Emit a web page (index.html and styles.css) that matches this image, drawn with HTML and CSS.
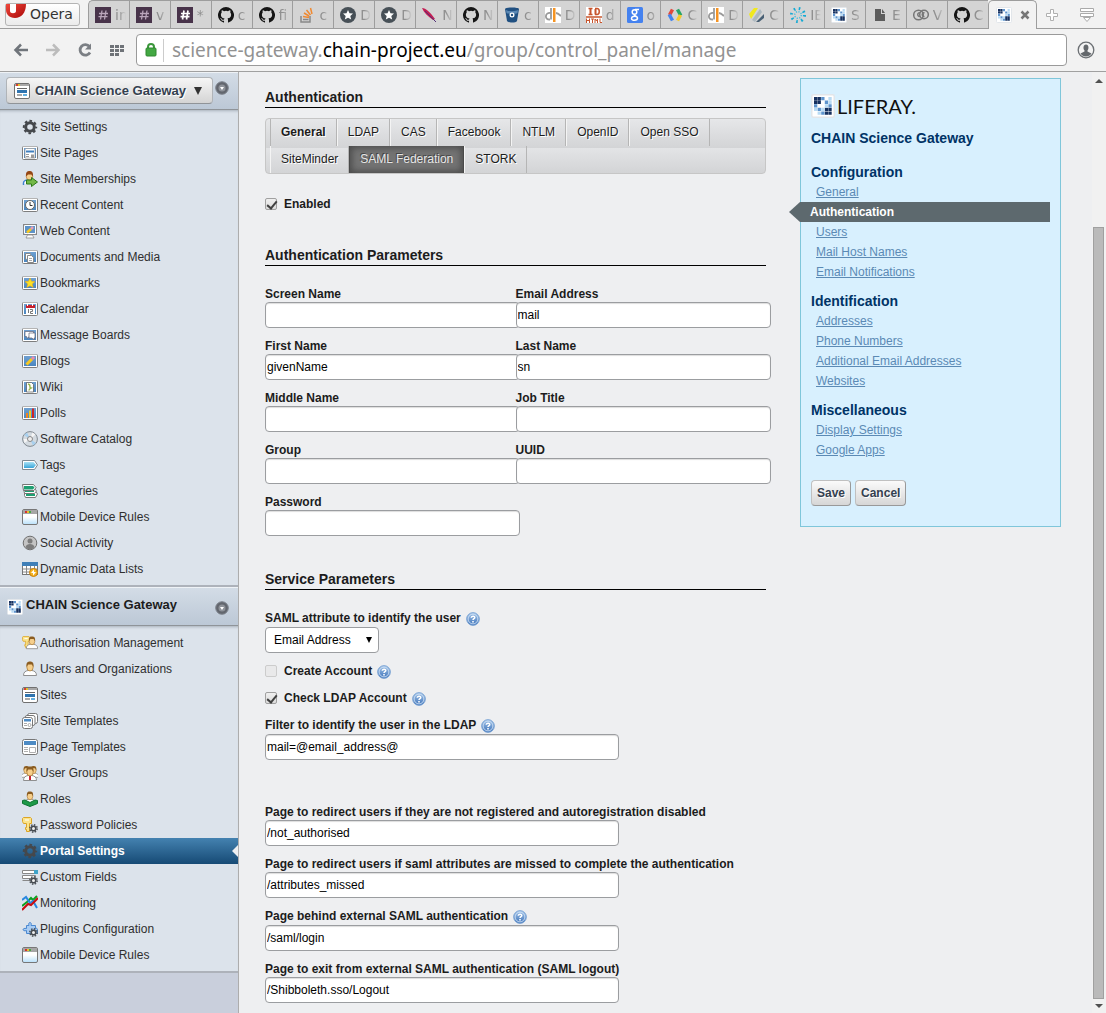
FILE: index.html
```html
<!DOCTYPE html>
<html lang="en">
<head>
<meta charset="utf-8">
<title>CHAIN Science Gateway - Control Panel</title>
<link rel="stylesheet" href="styles.css">
</head>
<body>
<svg class="sprite" aria-hidden="true">
  <defs>
    <linearGradient id="g-blue" x1="0" y1="0" x2="0" y2="1"><stop offset="0" stop-color="#6fa0d0"/><stop offset="1" stop-color="#4a86c0"/></linearGradient>
    <linearGradient id="g-help" x1="0" y1="0" x2="0" y2="1"><stop offset="0" stop-color="#a8c8ea"/><stop offset="1" stop-color="#3a70b8"/></linearGradient>
    <linearGradient id="g-win" x1="0" y1="0" x2="0" y2="1"><stop offset="0.5" stop-color="#fff"/><stop offset="1" stop-color="#b8e0fa"/></linearGradient>
    <linearGradient id="g-tag" x1="0" y1="0" x2="0" y2="1"><stop offset="0" stop-color="#a8e2f6"/><stop offset="1" stop-color="#38a4d8"/></linearGradient>
    <linearGradient id="g-red" x1="0" y1="0" x2="1" y2="1"><stop offset="0" stop-color="#f0483c"/><stop offset="1" stop-color="#a80808"/></linearGradient>
  </defs>
  <symbol id="frame" viewBox="0 0 16 16"><rect x="0.5" y="1.5" width="15" height="13" rx="1" fill="#fff" stroke="#7d7d7d"/><path d="M1 1.5h14" stroke="#b4b4b4"/><rect x="2" y="3" width="12" height="10" fill="url(#g-blue)"/></symbol>
  <symbol id="gear" viewBox="0 0 16 16"><circle cx="8" cy="8" r="4.3" fill="none" stroke="#45484c" stroke-width="3"/><circle cx="8" cy="8" r="6.2" fill="none" stroke="#45484c" stroke-width="2" stroke-dasharray="2.6 2.27" stroke-dashoffset="1.3"/></symbol>
  <symbol id="liferay" viewBox="0 0 16 16"><rect x=".5" y=".5" width="15" height="15" rx="1" fill="#fff" stroke="#e2e6ea"/><path fill="#17315f" d="M2 2h2.200v2.200H2zM4.400 2h2.200v2.200H4.400zM4.400 4.400h2.200v2.200H4.400zM2 4.400h2.200v2.200H2zM9.200 9.200h2.200v2.200H9.200zM11.600 9.200h2.200v2.200h-2.200zM9.200 11.600h2.200v2.200H9.200zM11.600 11.600h2.200v2.200h-2.200z"/><path fill="#5f94cd" d="M6.800 2H9v2.200H6.800zM2 6.800h2.200V9H2zM9.200 4.400h2.200v2.200H9.200zM11.600 6.800h2.200V9h-2.200zM6.800 11.600H9v2.200H6.800zM4.400 9.200h2.200v2.200H4.400z"/><path fill="#b9dbf4" d="M11.600 2h2.200v2.200h-2.200zM11.600 4.400h2.200v2.200h-2.200zM9.200 6.800h2.200V9H9.200zM6.800 9.200H9v2.200H6.800zM4.400 11.600h2.200v2.200H4.400zM2 9.200h2.200v2.200H2z"/></symbol>
  <symbol id="site" viewBox="0 0 16 16"><rect x=".5" y=".5" width="15" height="15" rx="1.500" fill="#fff" stroke="#707070"/><path fill="#a8a8a8" d="M1 1h14v2H1z"/><path fill="#d84030" d="M2 1h2v2H2z"/><path fill="#e0c030" d="M4 1h2v2H4z"/><path fill="#666" d="M3 5h10v1H3z"/><path fill="#2f74b0" d="M3 7h10v3H3z"/><path fill="#a8a8a8" d="M3 11h5v2H3z"/><path fill="#63aede" d="M9 11h4v2H9z"/></symbol>
  <symbol id="pages" viewBox="0 0 16 16"><use href="#frame"/><path fill="#fff" stroke="#888" stroke-width=".6" d="M3 13V4.500l1-1h8l1 1V13z"/><path fill="#3f7fbe" d="M4 5.500h8v2H4z"/><path fill="#999" d="M4 9h3v1H4zM4 11h3v1H4zM9 9.500h3V13H9z"/></symbol>
  <symbol id="person" viewBox="0 0 16 16"><path fill="#fff" stroke="#8f8f8f" d="M1.500 14.500c0-3.500 2-4.500 4.500-5h4c2.500.5 4.500 1.500 4.500 5z"/><ellipse cx="8" cy="6" rx="3.200" ry="4" fill="#f6cf8c" stroke="#a8752c" stroke-width=".7"/><path fill="#8b5d22" d="M4.500 6C4 1 6 .5 8 .5s4 .5 3.500 5.500L10 3.500H6z"/></symbol>
  <symbol id="member" viewBox="0 0 16 16"><path fill="#fff" stroke="#3d7fd0" stroke-width="1.500" d="M1.500 14V12c0-2.500 3-3 4-3h4"/><ellipse cx="7.500" cy="5.500" rx="3.200" ry="3.600" fill="#f6cf8c" stroke="#b06c30" stroke-width=".7"/><path fill="#944614" d="M4 5.500C3.500 1 5.500 0 7.500 0S11.500 1 11 5.500L9.500 3.500H6z"/><path fill="#73b848" stroke="#2e7a18" d="M4.500 9h5V6.500l6 4.500-6 4.500V13h-5z"/></symbol>
  <symbol id="recent" viewBox="0 0 16 16"><use href="#frame"/><circle cx="8" cy="8" r="4.500" fill="#fff" stroke="#666"/><path d="M8 5v3.500h2.500" fill="none" stroke="#333"/></symbol>
  <symbol id="pencilframe" viewBox="0 0 16 16"><use href="#frame"/><path stroke="#f8c820" stroke-width="3" d="M4.500 11.500L10 6"/><path stroke="#e88cb0" stroke-width="3" d="M10 6l2-2"/></symbol>
  <symbol id="web" viewBox="0 0 16 16"><rect x="1.500" y="1.500" width="13" height="10" fill="#5d93c8" stroke="#888"/><path fill="none" stroke="#fff" d="M2.500 2.500h11v8h-11z"/><path stroke="#f8c820" stroke-width="2.500" d="M5 9.500L9 6"/><path stroke="#e6a0b8" stroke-width="2.500" d="M9 6l2-2"/><path fill="#fff" stroke="#8b8b8b" stroke-width=".8" d="M5.500 12h5l1.500 3H4z"/></symbol>
  <symbol id="docs" viewBox="0 0 16 16"><use href="#frame"/><path fill="#fff" stroke="#888" d="M3.500 11V4.500h5v1M5.500 6.500h4l2 2v5h-6z"/><path stroke="#aaa" d="M7 9.500h3M7 11.500h3"/></symbol>
  <symbol id="star" viewBox="0 0 16 16"><use href="#frame"/><path fill="#fde023" stroke="#eaa814" stroke-width=".5" d="M8 3l1.500 3.300 3.500.3-2.700 2.300.9 3.600L8 10.700l-3.200 1.800.9-3.600L3 6.600l3.500-.3z"/></symbol>
  <symbol id="calendar" viewBox="0 0 16 16"><use href="#frame"/><path fill="#fff" d="M4 7h9v6H4z"/><path fill="#c9202c" d="M4 4h9v3H4z"/><path fill="#fff" d="M5 3h1v2H5zM10 3h1v2h-1z"/><path fill="none" stroke="#777" d="M6.500 8v4M8 8.500h2.500v2H8.500v2H11"/></symbol>
  <symbol id="message" viewBox="0 0 16 16"><use href="#frame"/><path fill="#fff" stroke="#667" stroke-width=".7" d="M3 4.500h8.500v5H7l-1.500 2-1-2H3z"/><path fill="#fff" stroke="#667" stroke-width=".7" d="M7 6h6v5h-1v2l-2-2H7z"/></symbol>
  <symbol id="wiki" viewBox="0 0 16 16"><use href="#frame"/><path fill="#fff" stroke="#555" stroke-width=".7" d="M4.500 3.500h5l2 2V13h-7z"/><path fill="none" stroke="#9ab850" stroke-width="1.500" d="M6 5c4 1 0 3 3 4-2 1-2 2-2 2.500"/></symbol>
  <symbol id="polls" viewBox="0 0 16 16"><use href="#frame"/><path fill="#ee8424" d="M4 8h2v5H4z"/><path fill="#f0d024" d="M7 5.500h2V13H7z"/><path fill="#cf2626" d="M10 3.500h2V13h-2z"/></symbol>
  <symbol id="disc" viewBox="0 0 16 16"><circle cx="8" cy="8" r="7.400" fill="#d3dae0" stroke="#818990"/><path fill="#a8d0ee" d="M8 8L2 4l3-2.500zM8 8l6 4-3 2.500z"/><path fill="#f5f5f5" d="M8 8l2.500-6.500 3 2zM8 8l-5.500 4-1-4z"/><circle cx="8" cy="8" r="2.500" fill="#eee" stroke="#888"/></symbol>
  <symbol id="tag" viewBox="0 0 16 16"><path fill="#fff" stroke="#7e8a92" d="M.5 3.500h12L15.500 8l-3 4.500H.5z"/><path fill="url(#g-tag)" d="M2 5h9.500L14 8l-2.500 3H2z"/></symbol>
  <symbol id="categories" viewBox="0 0 16 16"><path fill="#fff" stroke="#777" d="M2.500 8.500h11l2 2.500-2 3.500h-10l-1-2z"/><path fill="#1f9f72" d="M4 11h9v2H4z"/><path fill="#fff" stroke="#777" d="M1.500 5.500h11l2 2.500-2 2.500h-10z"/><path fill="#1f9f72" d="M3 7h9v2H3z"/><path fill="#fff" stroke="#777" d="M.5 1.500h11l2.500 3-2 3H1.500z"/><path fill="#1f9f72" d="M2 3h9l1.500 1.500L11 6.500H2z"/></symbol>
  <symbol id="mobile" viewBox="0 0 16 16"><rect x=".5" y=".5" width="15" height="15" rx="1.500" fill="url(#g-win)" stroke="#777"/><path fill="#a6a6a6" d="M1 1h14v4H1z"/><path fill="#d43030" d="M3 2h2v2H3z"/><path fill="#e8c030" d="M5 2h2v2H5z"/><path fill="#48a848" d="M7 2h2v2H7z"/></symbol>
  <symbol id="social" viewBox="0 0 16 16"><circle cx="8" cy="8" r="6.800" fill="#c4c4c4" stroke="#6f6f6f"/><circle cx="8" cy="6" r="2.500" fill="#7c7c7c"/><path fill="#7c7c7c" d="M3.500 12c.5-2 2.500-3 4.500-3s4 1 4.500 3l-2 2h-5z"/></symbol>
  <symbol id="ddl" viewBox="0 0 16 16"><rect x=".5" y="1.500" width="15" height="12" fill="#fff" stroke="#777"/><path fill="#3f7fb8" d="M0 1h16v4H0z"/><path fill="none" stroke="#888" d="M1 8h14M1 11h14M4.500 5v8M8.500 5v8M12.500 5v8"/><circle cx="11.500" cy="11.500" r="4" fill="#f6b422" stroke="#c87d08"/><path fill="#fff" d="M12 8.500l-3 3.500h2v2.500l3-3.500h-2z"/></symbol>
  <symbol id="key" viewBox="0 0 16 16"><path fill="#fbe38a" stroke="#dca526" d="M1.500.5h7l1 1v5h-2v8h-3v-2h-1v-2h1v-4h-3l-1-2v-3z"/><path fill="#fff" d="M3 2.500h4v1H3z"/></symbol>
  <symbol id="auth" viewBox="0 0 16 16"><use href="#key" width="13" height="13" y="1"/><use href="#person" x="3" y="0" width="14" height="16"/></symbol>
  <symbol id="sitetpl" viewBox="0 0 16 16"><rect x="5.500" y=".5" width="10" height="10" rx="2" fill="#fff" stroke="#777"/><rect x="3" y="2.500" width="10" height="10" rx="2" fill="#fff" stroke="#777"/><rect x=".5" y="4.500" width="10" height="11" rx="2" fill="#fff" stroke="#777"/><path fill="#4d8bc4" d="M2 6h7v2.500H2z"/><path fill="#aaa" d="M2 10h3v1H2zM2 12h3v1H2z"/><circle cx="7.500" cy="12" r="1.500" fill="none" stroke="#aaa"/></symbol>
  <symbol id="pagetpl" viewBox="0 0 16 16"><rect x=".5" y=".5" width="15" height="15" rx="2" fill="#fff" stroke="#777"/><path fill="#4d8bc4" d="M2 2h12v4H2z"/><path stroke="#b0b0b0" d="M2 8.500h4M2 10.500h4M2 12.500h4"/><path fill="#fff" stroke="#b0b0b0" d="M7.500 8.500h6v5h-6z"/></symbol>
  <symbol id="groups" viewBox="0 0 16 16"><use href="#person" x="-2" y="0" width="13" height="14"/><use href="#person" x="5" y="0" width="13" height="14"/><use href="#person" x="0" y="1" width="16" height="16"/><path fill="#c82838" d="M7 11h2v4H7z"/></symbol>
  <symbol id="roles" viewBox="0 0 16 16"><use href="#person" x="1" y="0" width="14" height="14"/><path fill="#1d9a48" stroke="#0d7432" d="M.5 9.500L3 9l5 2.500L13 9l2.500.5v3L8 15.500l-7.500-3z"/></symbol>
  <symbol id="minigear" viewBox="0 0 16 16"><circle cx="11.500" cy="11.500" r="2.300" fill="#eee" stroke="#454a50" stroke-width="1.600"/><circle cx="11.500" cy="11.500" r="3.700" fill="none" stroke="#454a50" stroke-width="1.400" stroke-dasharray="1.500 1.400"/></symbol>
  <symbol id="password" viewBox="0 0 16 16"><use href="#key"/><use href="#minigear"/></symbol>
  <symbol id="fields" viewBox="0 0 16 16"><path fill="#fff" stroke="#888" d="M.5 1.500h13v3H.5zM.5 6.500h13v3H.5zM.5 11.500h9"/><path fill="#3fa3c8" d="M12 1h4v4h-4z"/><use href="#minigear"/></symbol>
  <symbol id="monitor" viewBox="0 0 16 16"><g fill="none" stroke-width="2"><path stroke="#0da020" d="M0 11l5-4 4-4 2 2 4-4"/><path stroke="#2888e0" d="M0 5l4-3 4 6 3-2 4 7"/><path stroke="#c80c10" d="M0 15l6-6 3 1 7-7"/></g></symbol>
  <symbol id="plugin" viewBox="0 0 16 16"><path fill="#a8ccf4" stroke="#4a88d0" d="M4.500 4.500H7c-1.500-4 3.500-4 2 0h4.500v3c1-.5 2 0 2 1v4h-11v-3c-4 1.500-5-3 0-2z"/><use href="#minigear"/></symbol>
  <symbol id="help" viewBox="0 0 16 16"><circle cx="8" cy="8" r="7.300" fill="url(#g-help)" stroke="#7aa4d4"/><circle cx="8" cy="8" r="5.600" fill="none" stroke="#d3e4f6"/><path fill="none" stroke="#fff" stroke-width="1.700" d="M6 6.700C6 4.200 10.200 4.200 10 6.500 10 7.700 8 7.700 8 9.200"/><path fill="#fff" d="M7.100 10.300h1.800V12H7.100z"/></symbol>
  <symbol id="round" viewBox="0 0 14 14"><circle cx="7" cy="7" r="6.300" fill="#62666e" stroke="#7f858e"/><circle cx="7" cy="7" r="3.500" fill="#8f939a"/><path fill="#fff" d="M5 6h4L7 9z"/></symbol>
  <symbol id="slack" viewBox="0 0 16 16"><path fill="#48334a" d="M0 0h16v16H0z"/><path stroke="#b9a4ba" stroke-width="1.300" d="M7 3.500l-1.500 9M11 3.500l-1.500 9M4 6.500h9M3.500 9.700h9"/></symbol>
  <symbol id="slackon" viewBox="0 0 16 16"><path fill="#48334a" d="M0 0h16v16H0z"/><path stroke="#fff" stroke-width="1.700" d="M7 3.500l-1.500 9M11 3.500l-1.500 9M4 6.500h9M3.500 9.700h9"/></symbol>
  <symbol id="github" viewBox="0 0 16 16"><path fill="#151515" d="M8 0a8 8 0 0 0-2.530 15.590c.4.070.55-.17.55-.38v-1.490c-2.230.48-2.700-.950-2.700-.950-.36-.92-.89-1.170-.89-1.170-.73-.5.050-.49.050-.49.800.06 1.230.830 1.230.830.720 1.220 1.870.870 2.330.660.070-.52.280-.870.510-1.070-1.780-.2-3.640-.890-3.640-3.950 0-.870.310-1.590.820-2.150-.080-.2-.36-1.020.080-2.120 0 0 .670-.220 2.200.820a7.600 7.600 0 0 1 4 0c1.530-1.040 2.200-.820 2.200-.820.440 1.100.160 1.920.080 2.120.510.560.820 1.280.820 2.150 0 3.070-1.870 3.750-3.650 3.950.290.250.540.730.540 1.480v2.200c0 .210.150.460.550.380A8 8 0 0 0 8 0z"/></symbol>
  <symbol id="so" viewBox="0 0 16 16"><path fill="none" stroke="#888" stroke-width="1.500" d="M2 9v6h9V9M4 12.500h5.500"/><path stroke="#ef8a32" stroke-width="1.500" d="M4 9.500l6 1M5 6l5 3M7.500 3l4 5M11.500 1l1.500 6"/></symbol>
  <symbol id="starball" viewBox="0 0 16 16"><circle cx="8" cy="8" r="8" fill="#475057"/><path fill="#fff" d="M8 3l1.500 3.300 3.500.3-2.700 2.300.9 3.600L8 10.700l-3.200 1.800.9-3.600L3 6.600l3.500-.3z"/></symbol>
  <symbol id="feather" viewBox="0 0 16 16"><path fill="#c31d52" d="M0 1c4 0 8 4 13 11l-2 1C6 9 2 6 0 1z"/><path fill="none" stroke="#553078" d="M3 4l11 11"/></symbol>
  <symbol id="bucket" viewBox="0 0 16 16"><path fill="#205081" d="M1 2c0-2 14-2 14 0l-2 12c-1 2-9 2-10 0z"/><path fill="#5b88b4" d="M2 3c2 1.500 10 1.500 12 0L13.500 6c-2 1.500-9 1.500-11 0z"/><circle cx="8" cy="8" r="2.500" fill="#fff"/><circle cx="8" cy="8" r="1.200" fill="#205081"/></symbol>
  <symbol id="dj" viewBox="0 0 16 16"><path fill="#fff" d="M0 0h16v16H0z"/><path fill="none" stroke="#9a9a9a" stroke-width="1.800" d="M6 1v11.500M5.500 6C0 5-1 13 5 12.500M11 6c2 0 3 1 5 3"/><path fill="#f59322" d="M8 1h2.500v14H8z"/></symbol>
  <symbol id="idhtml" viewBox="0 0 16 16"><path fill="#fff" d="M0 0h16v16H0z"/><g fill="none" stroke="#c8552d"><path stroke-width="2" d="M4.500 1.500v6M9.500 2v5.500"/><path stroke-width="1.500" d="M2.500 1.500h4M2.500 7.500h4M9 1.500h2c3 0 3 6 0 6H9M0 10h16"/><path d="M.5 11.500V16M3.500 11.500V16M1 13.500h2M5 12h3M6.500 12v4M9 16v-4l1.500 2 1-2v4M14 11.500v4h2"/></g></symbol>
  <symbol id="google" viewBox="0 0 16 16"><rect width="16" height="16" rx="1.500" fill="#4582ef"/><g fill="none" stroke="#fff" stroke-width="1.500"><circle cx="7.500" cy="5" r="2.300"/><path d="M8 2.500h4M7 7.500c0 1.500 3.500 1.500 3.500 3.500 0 3-6 3-6 .5 0-2 3-2.500 4.500-2"/></g></symbol>
  <symbol id="gdev" viewBox="0 0 16 16"><g fill="none" stroke-width="3.500"><path stroke="#e0493c" d="M5.500 2.500L2.500 8"/><path stroke="#4484ee" d="M2.200 7.500l3.300 6"/><path stroke="#28a468" d="M10.500 2.500L13.800 8.500"/><path stroke="#f6c92c" d="M13.500 8L10.500 13.500"/></g></symbol>
  <symbol id="layers" viewBox="0 0 16 16"><path fill="#f1e91e" d="M0 7l5-6h4L2 12z"/><path fill="#aeb9c0" d="M3 13l8-11 2 3-7 10z"/><path fill="#496074" d="M7 15l8-8v4l-5 4z"/></symbol>
  <symbol id="ieee" viewBox="0 0 16 16"><circle cx="8" cy="8" r="6.500" fill="none" stroke="#14aad4" stroke-width="3" stroke-dasharray="1.600 3.505"/><circle cx="8" cy="8" r="3.300" fill="none" stroke="#4cc0de" stroke-width="1.500" stroke-dasharray="1.200 1.392"/></symbol>
  <symbol id="file" viewBox="0 0 16 16"><path fill="#5c5c5c" d="M3 2h6v5h4v7H3zM10 2l3 4h-3z"/></symbol>
  <symbol id="cc" viewBox="0 0 16 16"><g fill="none" stroke="#777" stroke-width="1.500"><circle cx="5.500" cy="8" r="4.800"/><circle cx="11" cy="7.500" r="4.300"/><path d="M7 6c-3-1-3 4 0 3.500M11.500 6c-3-1-3 4 0 3.500"/></g></symbol>
</svg>

<header class="browser">
  <div class="tabstrip">
    <button class="opera"><svg viewBox="0 0 20 14" class="opera-logo"><path fill="url(#g-red)" d="M0 0h20c0 9-5 14-11 14S0 10 0 6z"/><path fill="#fff" d="M4 0h6v7c0 3-6 3-6 0z"/></svg>Opera</button>
    <nav class="tabs" aria-label="Browser tabs">
      <a class="tab" href="#"><svg><use href="#slack"/></svg><span>in</span></a>
      <a class="tab" href="#"><svg><use href="#slack"/></svg><span>v</span></a>
      <a class="tab" href="#"><svg><use href="#slackon"/></svg><span>*</span></a>
      <a class="tab" href="#"><svg><use href="#github"/></svg><span>c</span></a>
      <a class="tab" href="#"><svg><use href="#github"/></svg><span>fi</span></a>
      <a class="tab" href="#"><svg><use href="#so"/></svg><span>c</span></a>
      <a class="tab" href="#"><svg><use href="#starball"/></svg><span>D</span></a>
      <a class="tab" href="#"><svg><use href="#starball"/></svg><span>D</span></a>
      <a class="tab" href="#"><svg><use href="#feather"/></svg><span>N</span></a>
      <a class="tab" href="#"><svg><use href="#github"/></svg><span>N</span></a>
      <a class="tab" href="#"><svg><use href="#bucket"/></svg><span>c</span></a>
      <a class="tab" href="#"><svg><use href="#dj"/></svg><span>D</span></a>
      <a class="tab" href="#"><svg><use href="#idhtml"/></svg><span>d</span></a>
      <a class="tab" href="#"><svg><use href="#google"/></svg><span>o</span></a>
      <a class="tab" href="#"><svg><use href="#gdev"/></svg><span>C</span></a>
      <a class="tab" href="#"><svg><use href="#dj"/></svg><span>D</span></a>
      <a class="tab" href="#"><svg><use href="#layers"/></svg><span>C</span></a>
      <a class="tab" href="#"><svg><use href="#ieee"/></svg><span>IE</span></a>
      <a class="tab" href="#"><svg><use href="#liferay"/></svg><span>S</span></a>
      <a class="tab" href="#"><svg><use href="#file"/></svg><span>E</span></a>
      <a class="tab" href="#"><svg><use href="#cc"/></svg><span>V</span></a>
      <a class="tab" href="#"><svg><use href="#github"/></svg><span>C</span></a>
      <a class="tab current" href="#"><svg><use href="#liferay"/></svg><svg class="close" viewBox="0 0 10 10"><path d="M1.500 1.500l7 7M8.500 1.500l-7 7" stroke="#777" stroke-width="2.500"/></svg></a>
    </nav>
    <button class="strip-btn" aria-label="New tab"><svg viewBox="0 0 14 14"><path fill="#fff" stroke="#b0b0b0" d="M5.500 1.500h3v4h4v3h-4v4h-3v-4h-4v-3h4z"/></svg></button>
    <button class="strip-btn last" aria-label="Tab menu"><svg viewBox="0 0 16 14"><path fill="#fff" stroke="#aaa" d="M1.500.5h13v3h-13zM1.500 5.500h13v3h-13zM4.500 9.500h7l-3.500 4z"/></svg></button>
  </div>
  <div class="toolbar">
    <button aria-label="Back"><svg viewBox="0 0 16 16"><path fill="none" stroke="#70757b" stroke-width="2.500" d="M15 8H3M8 2.500L2.500 8 8 13.500"/></svg></button>
    <button aria-label="Forward"><svg viewBox="0 0 16 16"><path fill="none" stroke="#bcbcbc" stroke-width="2.500" d="M1 8h12M8 2.500L13.500 8 8 13.500"/></svg></button>
    <button aria-label="Reload"><svg viewBox="0 0 16 16"><path fill="none" stroke="#7b7f84" stroke-width="2.800" d="M12.500 4.500A5.300 5.300 0 1 0 13 10.500"/><path fill="#7b7f84" d="M14 1.500v6H8z"/></svg></button>
    <button aria-label="Speed dial"><svg viewBox="0 0 16 16"><path fill="#6f7378" d="M1 3h4v3H1zM6 3h4v3H6zM11 3h4v3h-4zM1 7h4v3H1zM6 7h4v3H6zM11 7h4v3h-4zM1 11h4v3H1zM6 11h4v3H6z"/></svg></button>
    <div class="address">
      <svg class="lock" viewBox="0 0 12 14"><path fill="none" stroke="#3b963b" stroke-width="2" d="M3 6V4c0-4 6-4 6 0v2"/><rect x="1" y="5" width="10" height="8" rx="1" fill="#43a843" stroke="#308830"/></svg>
      <p class="url">science-gateway.<strong>chain-project.eu</strong>/group/control_panel/manage</p>
    </div>
    <button class="profile" aria-label="Profile"><svg viewBox="0 0 18 18"><circle cx="9" cy="9" r="7.800" fill="#f4f4f4" stroke="#6c7074" stroke-width="1.300"/><path fill="#64686c" d="M9 3.500c3 0 3 4.500 1.500 6v1l4 2c-2.500 4-8.500 4-11 0l4-2v-1c-1.500-1.500-1.500-6 1.500-6z"/></svg></button>
  </div>
</header>

<div class="page">
  <aside class="sidebar">
    <div class="side-head">
      <button class="site-menu"><svg><use href="#site"/></svg><span>CHAIN Science Gateway</span><i class="caret"></i></button>
      <button class="collapse" aria-label="Collapse section"><svg><use href="#round"/></svg></button>
    </div>
    <ul class="side-list">
      <li><a href="#"><svg><use href="#gear"/></svg>Site Settings</a></li>
      <li><a href="#"><svg><use href="#pages"/></svg>Site Pages</a></li>
      <li><a href="#"><svg><use href="#member"/></svg>Site Memberships</a></li>
      <li><a href="#"><svg><use href="#recent"/></svg>Recent Content</a></li>
      <li><a href="#"><svg><use href="#web"/></svg>Web Content</a></li>
      <li><a href="#"><svg><use href="#docs"/></svg>Documents and Media</a></li>
      <li><a href="#"><svg><use href="#star"/></svg>Bookmarks</a></li>
      <li><a href="#"><svg><use href="#calendar"/></svg>Calendar</a></li>
      <li><a href="#"><svg><use href="#message"/></svg>Message Boards</a></li>
      <li><a href="#"><svg><use href="#pencilframe"/></svg>Blogs</a></li>
      <li><a href="#"><svg><use href="#wiki"/></svg>Wiki</a></li>
      <li><a href="#"><svg><use href="#polls"/></svg>Polls</a></li>
      <li><a href="#"><svg><use href="#disc"/></svg>Software Catalog</a></li>
      <li><a href="#"><svg><use href="#tag"/></svg>Tags</a></li>
      <li><a href="#"><svg><use href="#categories"/></svg>Categories</a></li>
      <li><a href="#"><svg><use href="#mobile"/></svg>Mobile Device Rules</a></li>
      <li><a href="#"><svg><use href="#social"/></svg>Social Activity</a></li>
      <li><a href="#"><svg><use href="#ddl"/></svg>Dynamic Data Lists</a></li>
    </ul>
    <div class="side-head portal">
      <h2><svg><use href="#liferay"/></svg>CHAIN Science Gateway</h2>
      <button class="collapse" aria-label="Collapse section"><svg><use href="#round"/></svg></button>
    </div>
    <ul class="side-list">
      <li><a href="#"><svg><use href="#auth"/></svg>Authorisation Management</a></li>
      <li><a href="#"><svg><use href="#person"/></svg>Users and Organizations</a></li>
      <li><a href="#"><svg><use href="#site"/></svg>Sites</a></li>
      <li><a href="#"><svg><use href="#sitetpl"/></svg>Site Templates</a></li>
      <li><a href="#"><svg><use href="#pagetpl"/></svg>Page Templates</a></li>
      <li><a href="#"><svg><use href="#groups"/></svg>User Groups</a></li>
      <li><a href="#"><svg><use href="#roles"/></svg>Roles</a></li>
      <li><a href="#"><svg><use href="#password"/></svg>Password Policies</a></li>
      <li><a class="active" href="#"><svg><use href="#gear"/></svg>Portal Settings</a></li>
      <li><a href="#"><svg><use href="#fields"/></svg>Custom Fields</a></li>
      <li><a href="#"><svg><use href="#monitor"/></svg>Monitoring</a></li>
      <li><a href="#"><svg><use href="#plugin"/></svg>Plugins Configuration</a></li>
      <li><a href="#"><svg><use href="#mobile"/></svg>Mobile Device Rules</a></li>
    </ul>
  </aside>

  <main class="content">
    <form class="settings">
      <h3 class="section">Authentication</h3>
      <ul class="auth-tabs">
        <li><a class="first" href="#">General</a></li>
        <li><a href="#">LDAP</a></li>
        <li><a href="#">CAS</a></li>
        <li><a href="#">Facebook</a></li>
        <li><a href="#">NTLM</a></li>
        <li><a href="#">OpenID</a></li>
        <li><a href="#">Open SSO</a></li>
        <li><a href="#">SiteMinder</a></li>
        <li><a class="selected" href="#">SAML Federation</a></li>
        <li><a href="#">STORK</a></li>
      </ul>
      <label class="check enabled"><input type="checkbox" checked>Enabled</label>

      <h3 class="section">Authentication Parameters</h3>
      <div class="pairs">
        <div class="field"><label for="screen">Screen Name</label><input id="screen" type="text"></div>
        <div class="field"><label for="email">Email Address</label><input id="email" type="text" value="mail"></div>
        <div class="field"><label for="first">First Name</label><input id="first" type="text" value="givenName"></div>
        <div class="field"><label for="last">Last Name</label><input id="last" type="text" value="sn"></div>
        <div class="field"><label for="middle">Middle Name</label><input id="middle" type="text"></div>
        <div class="field"><label for="job">Job Title</label><input id="job" type="text"></div>
        <div class="field"><label for="group">Group</label><input id="group" type="text"></div>
        <div class="field"><label for="uuid">UUID</label><input id="uuid" type="text"></div>
        <div class="field"><label for="pass">Password</label><input id="pass" type="text"></div>
      </div>

      <h3 class="section">Service Parameters</h3>
      <div class="stack">
        <div class="field">
          <label class="helped" for="attr">SAML attribute to identify the user<svg><use href="#help"/></svg></label>
          <div class="select"><select id="attr"><option>Email Address</option></select></div>
        </div>
        <label class="check helped"><input type="checkbox" disabled>Create Account<svg><use href="#help"/></svg></label>
        <label class="check helped"><input type="checkbox" checked>Check LDAP Account<svg><use href="#help"/></svg></label>
        <div class="field wide">
          <label class="helped" for="filter">Filter to identify the user in the LDAP<svg><use href="#help"/></svg></label>
          <input id="filter" type="text" value="mail=@email_address@">
        </div>
      </div>
      <div class="stack redirects">
        <div class="field wide"><label for="noreg">Page to redirect users if they are not registered and autoregistration disabled</label><input id="noreg" type="text" value="/not_authorised"></div>
        <div class="field wide"><label for="missed">Page to redirect users if saml attributes are missed to complete the authentication</label><input id="missed" type="text" value="/attributes_missed"></div>
        <div class="field wide"><label class="helped" for="login">Page behind external SAML authentication<svg><use href="#help"/></svg></label><input id="login" type="text" value="/saml/login"></div>
        <div class="field wide"><label for="logout">Page to exit from external SAML authentication (SAML logout)</label><input id="logout" type="text" value="/Shibboleth.sso/Logout"></div>
      </div>
    </form>

    <aside class="panel">
      <div class="logo"><svg><use href="#liferay"/></svg><span>LIFERAY.</span></div>
      <h2>CHAIN Science Gateway</h2>
      <h3 class="group first-group">Configuration</h3>
      <ul>
        <li><a href="#">General</a></li>
        <li class="here"><a href="#">Authentication</a></li>
        <li><a href="#">Users</a></li>
        <li><a href="#">Mail Host Names</a></li>
        <li><a href="#">Email Notifications</a></li>
      </ul>
      <h3 class="group">Identification</h3>
      <ul>
        <li><a href="#">Addresses</a></li>
        <li><a href="#">Phone Numbers</a></li>
        <li><a href="#">Additional Email Addresses</a></li>
        <li><a href="#">Websites</a></li>
      </ul>
      <h3 class="group">Miscellaneous</h3>
      <ul>
        <li><a href="#">Display Settings</a></li>
        <li><a href="#">Google Apps</a></li>
      </ul>
      <div class="actions"><button>Save</button><button>Cancel</button></div>
    </aside>
  </main>

  <div class="scrollbar"><i class="up"></i><div class="thumb"></div><i class="down"></i></div>
</div>
</body>
</html>
```

FILE: styles.css
```css
* { box-sizing: border-box; }

body {
  margin: 0;
  height: 100vh;
  display: flex;
  flex-direction: column;
  overflow: hidden;
  background: #eeeff1;
  color: #1c1c1c;
  font: 12px/16px "Liberation Sans", Arial, sans-serif;
}

ul, h2, h3, p { margin: 0; padding: 0; }
ul { list-style: none; }
a { color: inherit; text-decoration: none; }
button { font: inherit; padding: 0; border: 0; background: none; }
svg { width: 16px; height: 16px; flex: none; }
.sprite { position: absolute; width: 0; height: 0; }

/* browser chrome */
.browser {
  flex: none;
  background: #f2f2f2;
  border-bottom: 1px solid #a0a0a0;
  font-family: "DejaVu Sans", sans-serif;
}
.tabstrip {
  display: flex;
  height: 29px;
  background: linear-gradient(#f2f2f2, #f2f2f2 28px, #9d9d9d 28px);
}
.opera {
  display: flex;
  align-items: flex-start;
  gap: 4px;
  width: 75px;
  height: 23px;
  margin: 3px 8px 0 5px;
  border: 1px solid #b4b4b4;
  border-radius: 3px;
  background: linear-gradient(#fff, #ebebeb);
  font-size: 14px;
  line-height: 21px;
  color: #333;
}
.opera-logo { width: 20px; height: 14px; }
.tabs { display: flex; flex: 1; min-width: 0; }
.tab {
  display: flex;
  flex: 41 1 0;
  min-width: 0;
  gap: 4px;
  align-items: center;
  height: 29px;
  padding-left: 6px;
  background: #d4d4d4;
  border: solid #9d9d9d;
  border-width: 1px 0 1px 1px;
  font-size: 14px;
  color: #909090;
}
.tab span {
  flex: 1;
  white-space: nowrap;
  -webkit-mask-image: linear-gradient(90deg, #000 4px, transparent 11px);
  mask-image: linear-gradient(90deg, #000 4px, transparent 11px);
}
.tab:first-child { border-top-left-radius: 5px; }
.tab.current {
  flex-grow: 49;
  gap: 8px;
  padding-left: 7px;
  background: #f2f2f2;
  border-width: 1px 1px 0;
  border-radius: 5px 5px 0 0;
}
.tab .close { width: 10px; height: 10px; }
.strip-btn { width: 30px; height: 29px; }
.strip-btn svg { display: block; margin: 0 auto; width: 14px; }
.strip-btn.last { width: 39px; }
.strip-btn.last svg { width: 16px; }

.toolbar {
  display: flex;
  align-items: center;
  gap: 16px;
  height: 42px;
  padding: 0 11px 0 13px;
}
.toolbar button { height: 16px; }
.toolbar svg { display: block; }
.toolbar .profile { height: 18px; margin-left: -6px; }
.profile svg { width: 18px; height: 18px; }
.address {
  display: flex;
  align-items: center;
  flex: 1;
  height: 32px;
  margin-left: -5px;
  padding-left: 8px;
  background: #fff;
  border: 1px solid #9a9a9a;
  border-radius: 4px;
}
.address .lock { width: 12px; height: 14px; }
.url {
  margin-left: 6px;
  padding-left: 8px;
  border-left: 1px solid #ccc;
  font: 19px/23px "Noto Sans", sans-serif;
  color: #929292;
}
.url strong { font-weight: 400; color: #000; }

/* page body */
.page { display: flex; flex: 1; min-height: 0; }

.sidebar {
  flex: none;
  width: 239px;
  overflow: hidden;
  background: #c9cfdc;
  border-right: 1px solid #adadad;
}
.side-head {
  display: flex;
  justify-content: space-between;
  height: 38px;
  padding: 4px 9px 0 6px;
  border-top: 1px solid #eef2f6;
  border-bottom: 1px solid #8f9499;
  background: linear-gradient(#d3dce6, #bcc8d6);
}
.side-head .collapse { height: 14px; margin-top: 4px; }
.collapse svg { display: block; width: 14px; height: 14px; }
.site-menu {
  display: flex;
  align-items: center;
  gap: 5px;
  width: 207px;
  height: 27px;
  padding-left: 7px;
  border: 1px solid #b0b4b8;
  border-bottom-color: #909498;
  border-radius: 4px;
  background: linear-gradient(#f6f6f6, #d4d4d4);
  color: #34404f;
  font-size: 13px;
  font-weight: 700;
  text-shadow: 1px 1px #fff;
}
.caret {
  margin-left: 3px;
  border: solid transparent;
  border-width: 8px 4px 0;
  border-top-color: #333;
}
.portal { height: 39px; padding: 9px 9px 0 7px; }
.portal h2 {
  display: flex;
  align-items: center;
  gap: 3px;
  height: 16px;
  font-size: 13px;
}
.portal h2 svg { margin-top: 3px; }
.side-list {
  padding: 4px 0 3px;
  background: #dce3eb;
  border-bottom: 2px solid #adb2ba;
  box-shadow: inset 0 3px 3px -2px #a8b0ba;
  color: #2f2f2f;
}
.side-list a {
  display: flex;
  align-items: center;
  gap: 2px;
  height: 26px;
  padding-left: 22px;
  position: relative;
}
.side-list .active {
  background: linear-gradient(#4482b0, #164a75);
  color: #fff;
  font-weight: 700;
}
.active::after {
  content: "";
  position: absolute;
  right: 0;
  border: solid transparent;
  border-width: 6px 6px 6px 0;
  border-right-color: #eeeff1;
}

.content {
  display: grid;
  grid-template-columns: minmax(0, 1fr) 261px;
  align-items: start;
  gap: 34px;
  flex: 1;
  min-width: 0;
  padding: 6px 31px 10px 26px;
}
.settings { display: flex; flex-direction: column; padding-top: 10px; }
.section {
  height: 20px;
  margin-top: 34px;
  border-bottom: 1px solid #000;
  font-size: 14px;
  line-height: 18px;
}
.section:first-child { margin-top: 0; }

.auth-tabs {
  display: flex;
  flex-wrap: wrap;
  margin-top: 10px;
  padding-left: 4px;
  border: 1px solid #c6c6c6;
  border-radius: 4px;
  background: linear-gradient(#e6e7e9, #d3d4d6 29px, #e3e4e6 29px, #d3d4d6);
}
.auth-tabs a {
  display: block;
  height: 27px;
  padding: 0 10px;
  border-left: 1px solid #f4f4f4;
  border-right: 1px solid #b5b5b5;
  line-height: 27px;
  text-shadow: 1px 1px #fff;
}
.auth-tabs .first { font-weight: 700; border-left-color: #b5b5b5; }
.auth-tabs .selected {
  border-color: #4a4a4a;
  background: #737373;
  box-shadow: inset 0 0 6px 2px #4c4c4c;
  color: #e6e6e6;
  text-shadow: -1px -1px #444;
}

.check {
  display: flex;
  align-items: flex-start;
  align-self: flex-start;
  height: 16px;
  font-weight: 700;
}
.enabled { margin-top: 22px; }
.check input {
  appearance: none;
  width: 12px;
  height: 12px;
  margin: 2px 7px 0 0;
  border: 1px solid #a0a0a0;
  border-radius: 2px;
  background: linear-gradient(#efefef, #dcdcdc);
  position: relative;
}
.check input:disabled { border-color: #ccc; background: #e9e9ea; }
.check input:checked::after {
  content: "";
  position: absolute;
  left: 3px;
  top: 0;
  width: 4px;
  height: 8px;
  border: solid #404040;
  border-width: 0 2px 2px 0;
  transform: rotate(40deg);
}

.pairs {
  display: grid;
  grid-template-columns: repeat(2, minmax(0, 1fr));
  row-gap: 10px;
  margin-top: 20px;
}
.field { display: flex; flex-direction: column; }
.field label { display: flex; height: 16px; font-weight: 700; white-space: nowrap; }
.field input {
  width: 255px;
  height: 26px;
  padding: 0 1px;
  border: 1px solid #9b9da0;
  border-radius: 4px;
  background: #fff;
  box-shadow: inset 0 1px 1px #ddd;
  font: inherit;
  color: #000;
}
.wide input { width: 354px; }
.stack { display: flex; flex-direction: column; gap: 10px; margin-top: 20px; }
.redirects { margin-top: 44px; }
.field .helped, .check.helped { height: 17px; }
.helped svg { width: 14px; height: 14px; margin: 2px 0 0 5px; }
.select { position: relative; width: 114px; }
.select select {
  display: block;
  appearance: none;
  width: 100%;
  height: 26px;
  padding: 0 8px;
  border: 1px solid #9b9da0;
  border-radius: 4px;
  background: #fff;
  font: inherit;
  color: #000;
}
.select::after {
  content: "";
  position: absolute;
  right: 7px;
  top: 10px;
  border: solid transparent;
  border-width: 6px 3px 0;
  border-top-color: #000;
}

.panel {
  padding: 15px 10px 20px;
  border: 1px solid #7fc6da;
  background: #d8f0fe;
}
.panel h2, .group { font-size: 14px; line-height: 18px; color: #036; }
.panel h2 { margin-top: 11px; }
.group { margin: 10px 0 1px; }
.first-group { margin-top: 16px; }
.logo {
  display: flex;
  align-items: center;
  gap: 2px;
  height: 24px;
  color: #101010;
}
.logo svg { width: 24px; height: 24px; }
.logo span { font: 20px/24px Lato, sans-serif; }
.panel li { height: 20px; padding-left: 5px; line-height: 20px; }
.panel li a { color: #5b8ab5; text-decoration: underline; }
.panel .here {
  position: relative;
  margin-left: -11px;
  padding-left: 10px;
  background: #5d696e;
}
.panel .here a { color: #fff; font-weight: 700; text-decoration: none; }
.here::before {
  content: "";
  position: absolute;
  right: 100%;
  top: 0;
  border: solid transparent;
  border-width: 10px 11px 10px 0;
  border-right-color: #5d696e;
}
.actions { display: flex; gap: 4px; margin-top: 20px; }
.actions button {
  height: 26px;
  padding: 0 5px;
  border: 1px solid #c0c0c0;
  border-bottom-color: #999;
  border-right-color: #999;
  border-radius: 4px;
  background: linear-gradient(#fafafa, #d6d6d6);
  color: #34404f;
  font-weight: 700;
  text-shadow: 1px 1px #fff;
}

.scrollbar {
  display: flex;
  flex-direction: column;
  flex: none;
  width: 14px;
  padding: 7px 2px 5px 1px;
  background: #f1f1f1;
}
.scrollbar i { align-self: center; border: 4px solid transparent; }
.scrollbar .up { margin-bottom: 144px; border-top: 0; border-bottom-color: #505050; }
.scrollbar .down { margin-top: 5px; border-bottom: 0; border-top-color: #505050; }
.thumb { flex: 1; border: 1px solid #a0a0a0; background: #bababa; }
```
